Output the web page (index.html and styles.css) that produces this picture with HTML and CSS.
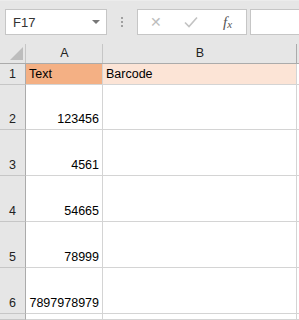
FILE: index.html
```html
<!DOCTYPE html>
<html lang="en">
<head>
    <meta charset="UTF-8">
    <title>Barcode sheet</title>
    <link rel="stylesheet" href="styles.css">
</head>
<body>
    <!-- Barra de fórmulas -->
    <div class="toolbar">
        <div class="name-box">
            <span>F17</span>
            <span class="arrow"></span>
        </div>
        <div class="dots"><i></i><i></i><i></i></div>
        <div class="fx-buttons">
            <span class="btn-x">&#x2715;</span>
            <svg class="btn-ok" width="14" height="12" viewBox="0 0 14 12">
                <path d="M1 6.5 L5 10.5 L13 1.5" fill="none" stroke="#c3c3c3" stroke-width="1.6"/>
            </svg>
            <span class="btn-fx">f<sub>x</sub></span>
        </div>
        <div class="formula-input"></div>
    </div>

    <!-- Planilha -->
    <div class="sheet">
        <div class="hdr corner"><span class="tri"></span></div>
        <div class="hdr col">A</div>
        <div class="hdr col">B</div>
        <div class="hdr col last"></div>

        <div class="rh r1">1</div>
        <div class="cell r1 fill-a">Text</div>
        <div class="cell r1 fill-b">Barcode</div>
        <div class="cell r1"></div>

        <div class="rh r2">2</div>
        <div class="cell r2 num">123456</div>
        <div class="cell r2"></div>
        <div class="cell r2"></div>

        <div class="rh">3</div>
        <div class="cell num">4561</div>
        <div class="cell"></div>
        <div class="cell"></div>

        <div class="rh">4</div>
        <div class="cell num">54665</div>
        <div class="cell"></div>
        <div class="cell"></div>

        <div class="rh">5</div>
        <div class="cell num">78999</div>
        <div class="cell"></div>
        <div class="cell"></div>

        <div class="rh">6</div>
        <div class="cell num">7897978979</div>
        <div class="cell"></div>
        <div class="cell"></div>

        <div class="rh"></div>
        <div class="cell"></div>
        <div class="cell"></div>
        <div class="cell"></div>
    </div>
</body>
</html>
```

FILE: styles.css
```css
body {
    margin: 0;
    padding: 0;
    width: 299px;
    height: 320px;
    overflow: hidden;
    background-color: #e6e6e6;
    font-family: "Liberation Sans", Arial, sans-serif;
    color: #000;
}
.toolbar {
    height: 42px;
    display: flex;
    align-items: flex-start;
    padding-top: 8px;
    box-sizing: border-box;
    background-color: #e6e6e6;
    border-top: 1px solid #ececec;
}
.name-box {
    width: 102px;
    height: 26px;
    margin-left: 5px;
    box-sizing: border-box;
    background: #fff;
    border: 1px solid #c6c6c6;
    display: flex;
    align-items: center;
    justify-content: space-between;
    padding: 0 6px 0 7px;
    font-size: 13px;
    color: #333;
}
.arrow {
    width: 0;
    height: 0;
    border-left: 4px solid transparent;
    border-right: 4px solid transparent;
    border-top: 4px solid #777;
}
.dots {
    width: 30px;
    height: 26px;
    display: flex;
    flex-direction: column;
    align-items: center;
    justify-content: center;
    gap: 2px;
}
.dots i {
    width: 2px;
    height: 2px;
    background: #a0a0a0;
}
.fx-buttons {
    width: 110px;
    height: 26px;
    box-sizing: border-box;
    background: #fff;
    border: 1px solid #c6c6c6;
    display: flex;
    align-items: center;
    padding-left: 12px;
}
.btn-x {
    width: 14px;
    font-size: 14px;
    color: #bdbdbd;
}
.btn-ok {
    margin-left: 20px;
}
.btn-fx {
    margin-left: 25px;
    font-family: "Liberation Serif", serif;
    font-style: italic;
    font-size: 15px;
    color: #555;
}
.btn-fx sub {
    font-size: 11px;
    vertical-align: -1px;
}
.formula-input {
    flex: 1;
    height: 26px;
    margin-left: 3px;
    box-sizing: border-box;
    background: #fff;
    border: 1px solid #c6c6c6;
    border-right: none;
}
.sheet {
    display: grid;
    grid-template-columns: 26px 77px 194px 10px;
    grid-template-rows: 22px 21px 45px 46px 46px 46px 46px 6px;
    background: #fff;
    font-size: 12.5px;
}
.hdr {
    background: #e6e6e6;
    border-bottom: 1px solid #ababab;
    display: flex;
    align-items: center;
    justify-content: center;
    color: #222;
    position: relative;
    padding-top: 1px;
}
.hdr::after {
    content: "";
    position: absolute;
    right: 0;
    top: 2px;
    bottom: 0;
    width: 1px;
    background: #c6c6c6;
}
.hdr.col:nth-child(3)::after {
    background: #ababab;
}
.hdr.last::after {
    display: none;
}
.tri {
    position: absolute;
    right: 3px;
    bottom: 3px;
    width: 0;
    height: 0;
    border-left: 13px solid transparent;
    border-bottom: 13px solid #bdbdbd;
}
.rh {
    background: #e6e6e6;
    border-right: 1px solid #ababab;
    border-bottom: 1px solid #c6c6c6;
    display: flex;
    align-items: flex-end;
    justify-content: center;
    padding-bottom: 3px;
    color: #222;
}
.cell {
    border-right: 1px solid #d4d4d4;
    border-bottom: 1px solid #d4d4d4;
    display: flex;
    align-items: flex-end;
    padding: 0 3px 3px 3px;
    white-space: nowrap;
    overflow: hidden;
}
.num {
    justify-content: flex-end;
}
.fill-a {
    background: #f4b084;
}
.fill-b {
    background: #fce4d6;
}
```
